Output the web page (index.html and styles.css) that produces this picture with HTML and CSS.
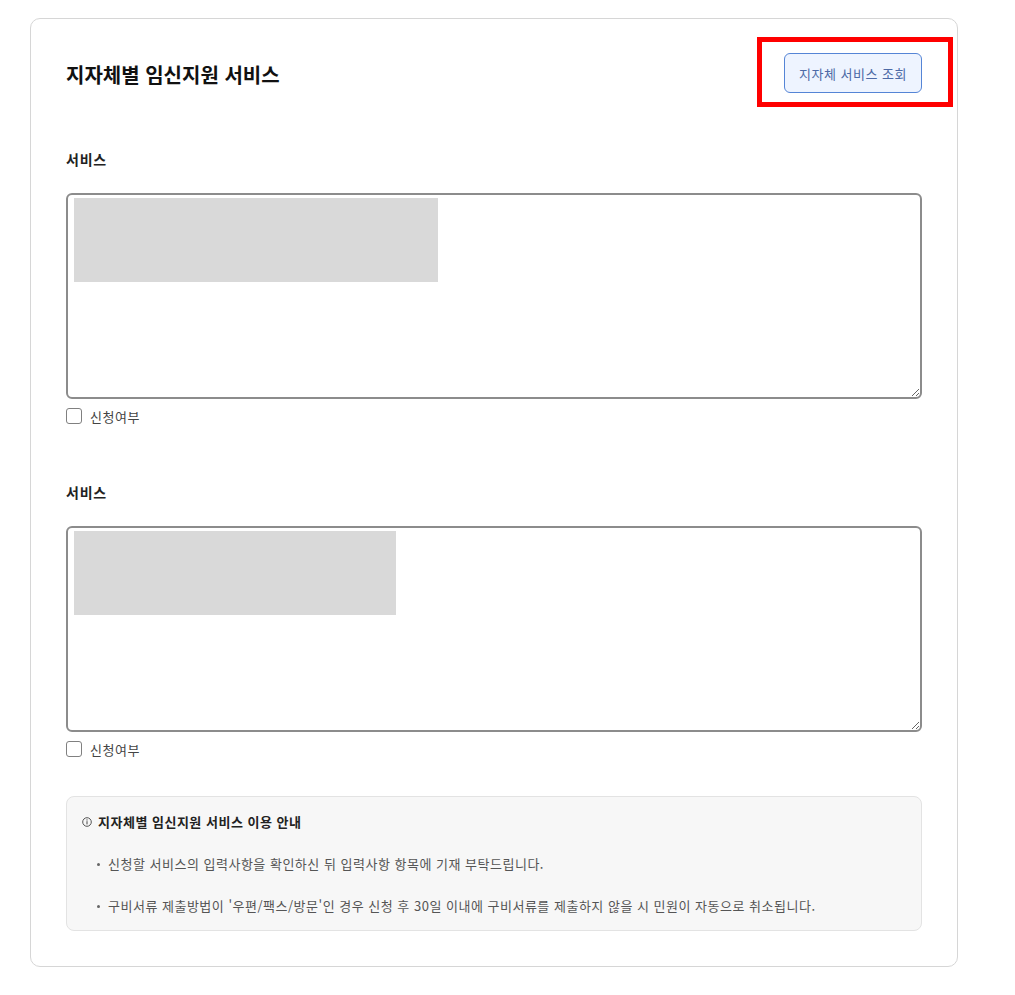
FILE: index.html
```html
<!DOCTYPE html>
<html lang="ko">
<head>
    <meta charset="UTF-8">
    <meta name="viewport" content="width=device-width, initial-scale=1.0">
    <title>지자체별 임신지원 서비스</title>
    <link rel="stylesheet" href="styles.css">
</head>
<body>

    <div class="card">
        <div class="card-header">
            <h2>지자체별 임신지원 서비스</h2>
            <div class="highlight">
                <button class="lookup-btn">지자체 서비스 조회</button>
            </div>
        </div>

        <div class="service-group">
            <div class="group-label">서비스</div>
            <div class="service-box">
                <div class="redacted" style="width: 364px;"></div>
            </div>
            <label class="check-row"><input type="checkbox"> 신청여부</label>
        </div>

        <div class="service-group">
            <div class="group-label">서비스</div>
            <div class="service-box">
                <div class="redacted" style="width: 322px;"></div>
            </div>
            <label class="check-row"><input type="checkbox"> 신청여부</label>
        </div>

        <div class="notice">
            <div class="notice-title">
                <svg class="info-icon" width="10" height="10" viewBox="0 0 10 10">
                    <circle cx="5" cy="5" r="4.3" fill="none" stroke="#444" stroke-width="0.9"/>
                    <line x1="5" y1="4.2" x2="5" y2="7.4" stroke="#444" stroke-width="1"/>
                    <circle cx="5" cy="2.9" r="0.6" fill="#444"/>
                </svg>
                지자체별 임신지원 서비스 이용 안내
            </div>
            <ul class="notice-list">
                <li>신청할 서비스의 입력사항을 확인하신 뒤 입력사항 항목에 기재 부탁드립니다.</li>
                <li>구비서류 제출방법이 '우편/팩스/방문'인 경우 신청 후 30일 이내에 구비서류를 제출하지 않을 시 민원이 자동으로 취소됩니다.</li>
            </ul>
        </div>
    </div>

</body>
</html>
```

FILE: styles.css
```css
body { margin: 0; padding: 18px 0 30px 30px; background: #fff; font-family: "Noto Sans CJK KR", "Noto Sans", sans-serif; color: #222; }
.card { width: 928px; box-sizing: border-box; border: 1px solid #d6d6d6; border-radius: 10px; padding: 18px 35px 35px; }
.card-header { display: flex; justify-content: space-between; align-items: center; height: 70px; margin-top: 1px; }
.card-header h2 { margin: 0; font-size: 20px; font-weight: 700; color: #111; line-height: 24px; padding-top: 4px; }
.highlight { position: relative; }
.highlight::after { content: ""; position: absolute; top: -16px; right: -31px; bottom: -14px; left: -27px; border: 5px solid #ff0000; pointer-events: none; }
.lookup-btn { display: block; width: 138px; height: 40px; background: #eef4ff; border: 1.5px solid #5585d6; border-radius: 6px; color: #4d6aa6; font-family: inherit; font-size: 13px; letter-spacing: 0.5px; cursor: pointer; }
.service-group { margin-top: 41px; }
.service-group + .service-group { margin-top: 56px; }
.group-label { font-size: 14px; font-weight: 700; line-height: 20px; color: #222; letter-spacing: 0.8px; }
.service-box { margin-top: 24px; height: 206px; box-sizing: border-box; border: 2px solid #8c8c8c; border-radius: 6px; padding: 3px 6px; resize: vertical; overflow: auto; }
.redacted { height: 84px; background: #d9d9d9; }
.check-row { display: flex; align-items: center; gap: 8px; margin-top: 7px; height: 20px; font-size: 13px; letter-spacing: 0.5px; color: #444; }
.check-row input { appearance: none; margin: 0; width: 16px; height: 16px; border: 1.5px solid #808080; border-radius: 3px; background: #fff; }
.notice { margin-top: 37px; background: #f7f7f7; border: 1px solid #e3e3e3; border-radius: 8px; padding: 15px 15px 14px; }
.notice-title { display: flex; align-items: center; gap: 6px; font-size: 13px; letter-spacing: 0.5px; font-weight: 700; color: #222; line-height: 20px; }
.info-icon { flex: none; }
.notice-list { list-style: none; margin: 0; padding: 0 0 0 10px; }
.notice-list li { position: relative; margin-top: 22px; padding-left: 16px; font-size: 13px; letter-spacing: 0.5px; line-height: 20px; color: #555; }
.notice-list li::before { content: ""; position: absolute; left: 5px; top: 9px; width: 3px; height: 3px; border-radius: 50%; background: #666; }
```
